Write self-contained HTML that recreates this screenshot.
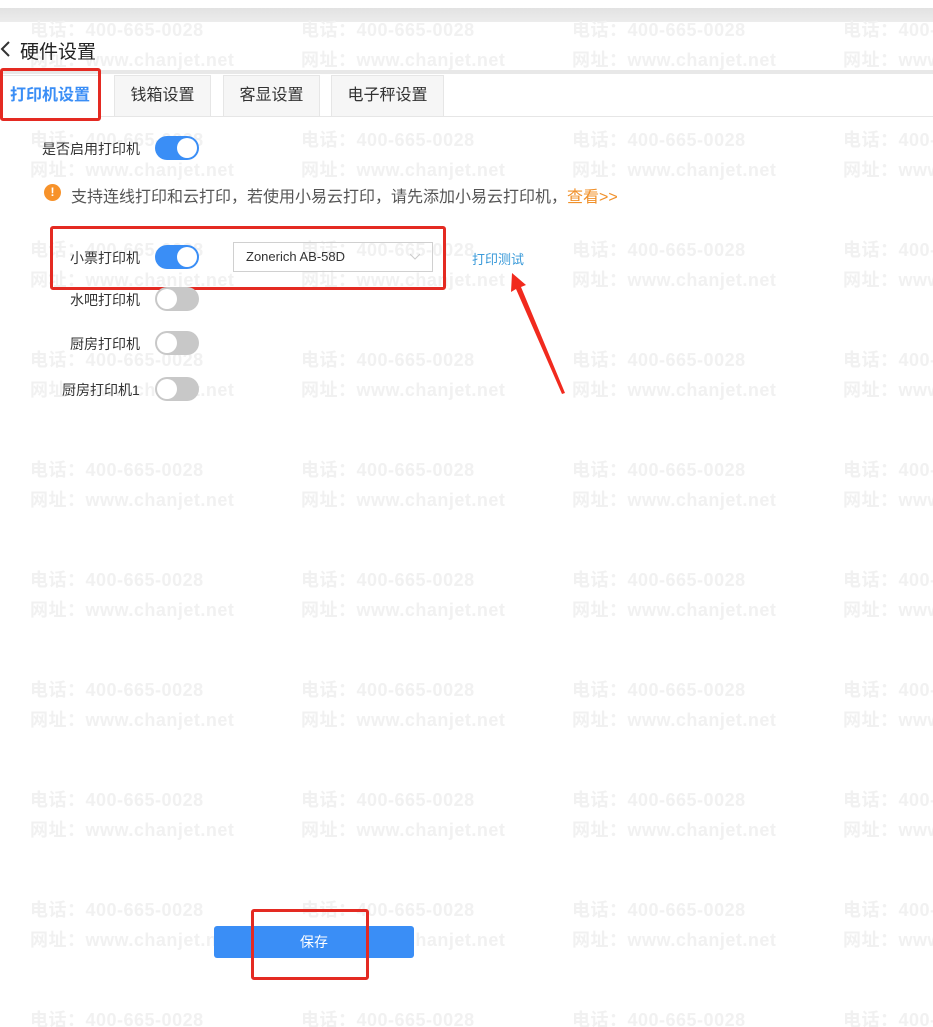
<!DOCTYPE html>
<html><head><meta charset="utf-8"><style>
*{margin:0;padding:0;box-sizing:border-box}
html{overflow:hidden;width:933px;height:1027px}
body{width:933px;height:1027px;background:#fff;position:relative;overflow:hidden;font-family:"Liberation Sans","Noto Sans CJK SC",sans-serif;color:#333}
.a{position:absolute;white-space:nowrap}
.wm{position:absolute;font-weight:bold;font-size:18px;letter-spacing:0.5px;color:#f1f1f1;white-space:nowrap;line-height:20px}
.sw{position:absolute;width:44px;height:24px;border-radius:12px}
.sw.on{background:#3a8ef6}.sw.off{background:#c8c8c8}
.sw i{position:absolute;top:2px;width:20px;height:20px;border-radius:50%;background:#fff}
.sw.on i{right:2px}.sw.off i{left:2px}
.tab{position:absolute;top:75px;height:42px;background:#f6f6f6;border:1px solid #e6e6e6;font-size:16px;line-height:40px;text-align:center}
.lbl{font-size:14px;color:#333}
.box{position:absolute;border:3px solid #e42a22;border-radius:3px}
</style></head><body>
<div class="a" style="left:0;top:8px;width:933px;height:14px;background:linear-gradient(#e2e2e2,#ececec)"></div>
<div id="wms" style="position:absolute;left:0;top:0;width:933px;height:1027px;overflow:hidden"></div>
<script>
var h='';var cols=[30,301,572,843];
for(var r=0;r<10;r++){var y=20+r*110;for(var c=0;c<4;c++){h+='<div class="wm" style="left:'+cols[c]+'px;top:'+y+'px">电话：400-665-0028</div><div class="wm" style="left:'+cols[c]+'px;top:'+(y+30)+'px">网址：www.chanjet.net</div>';}}
document.getElementById('wms').innerHTML=h;
</script>
<svg class="a" style="left:0;top:40px" width="12" height="18"><path d="M9 2 L2 9 L9 16" stroke="#333" stroke-width="2" fill="none"/></svg>
<div class="a" style="left:20px;top:37px;font-size:19px;color:#222">硬件设置</div>
<div class="a" style="left:0;top:70px;width:933px;height:4px;background:#e8e8e8"></div>
<div class="a" style="left:0;top:116px;width:933px;height:1px;background:#e6e6e6"></div>
<div class="tab" style="left:0;width:100px;background:#fff;color:#3a8ef6;font-weight:bold;border-bottom-color:#fff">打印机设置</div>
<div class="tab" style="left:114px;width:97px">钱箱设置</div>
<div class="tab" style="left:223px;width:97px">客显设置</div>
<div class="tab" style="left:331px;width:113px">电子秤设置</div>
<div class="box" style="left:0;top:68px;width:101px;height:53px"></div>

<div class="a lbl" style="left:42px;top:139px">是否启用打印机</div>
<div class="sw on" style="left:155px;top:136px"><i></i></div>
<div class="a" style="left:44px;top:184px;width:17px;height:17px;border-radius:50%;background:#f7922a;color:#fff;font-size:12px;font-weight:bold;text-align:center;line-height:17px">!</div>
<div class="a" style="left:71px;top:183px;font-size:16px;color:#555">支持连线打印和云打印，若使用小易云打印，请先添加小易云打印机，<span style="color:#f0902a">查看&gt;&gt;</span></div>

<div class="a lbl" style="left:70px;top:248px">小票打印机</div>
<div class="sw on" style="left:155px;top:245px"><i></i></div>
<div class="a" style="left:233px;top:242px;width:200px;height:30px;border:1px solid #d0d0d0;font-size:13px;line-height:28px;padding-left:12px;color:#333">Zonerich AB-58D<svg style="position:absolute;right:12px;top:10px" width="10" height="8"><path d="M0 1 L5 6 L10 1" stroke="#ccc" fill="none"/></svg></div>
<div class="a" style="left:472px;top:249px;font-size:13px;color:#3a9ad9">打印测试</div>
<div class="box" style="left:50px;top:226px;width:396px;height:64px"></div>

<div class="a lbl" style="left:70px;top:290px">水吧打印机</div>
<div class="sw off" style="left:155px;top:287px"><i></i></div>
<div class="a lbl" style="left:70px;top:334px">厨房打印机</div>
<div class="sw off" style="left:155px;top:331px"><i></i></div>
<div class="a lbl" style="left:62px;top:380px">厨房打印机1</div>
<div class="sw off" style="left:155px;top:377px"><i></i></div>

<svg class="a" style="left:500px;top:265px" width="80" height="135"><path d="M12 8 L26 20 L21 22 L65 128 L62 129 L16 24 L11 27 Z" fill="#f12a1e"/></svg>

<div class="a" style="left:214px;top:926px;width:200px;height:32px;background:#3a8ef6;border-radius:3px;color:#fff;font-size:14px;text-align:center;line-height:32px">保存</div>
<div class="box" style="left:251px;top:909px;width:118px;height:71px"></div>
</body></html>
